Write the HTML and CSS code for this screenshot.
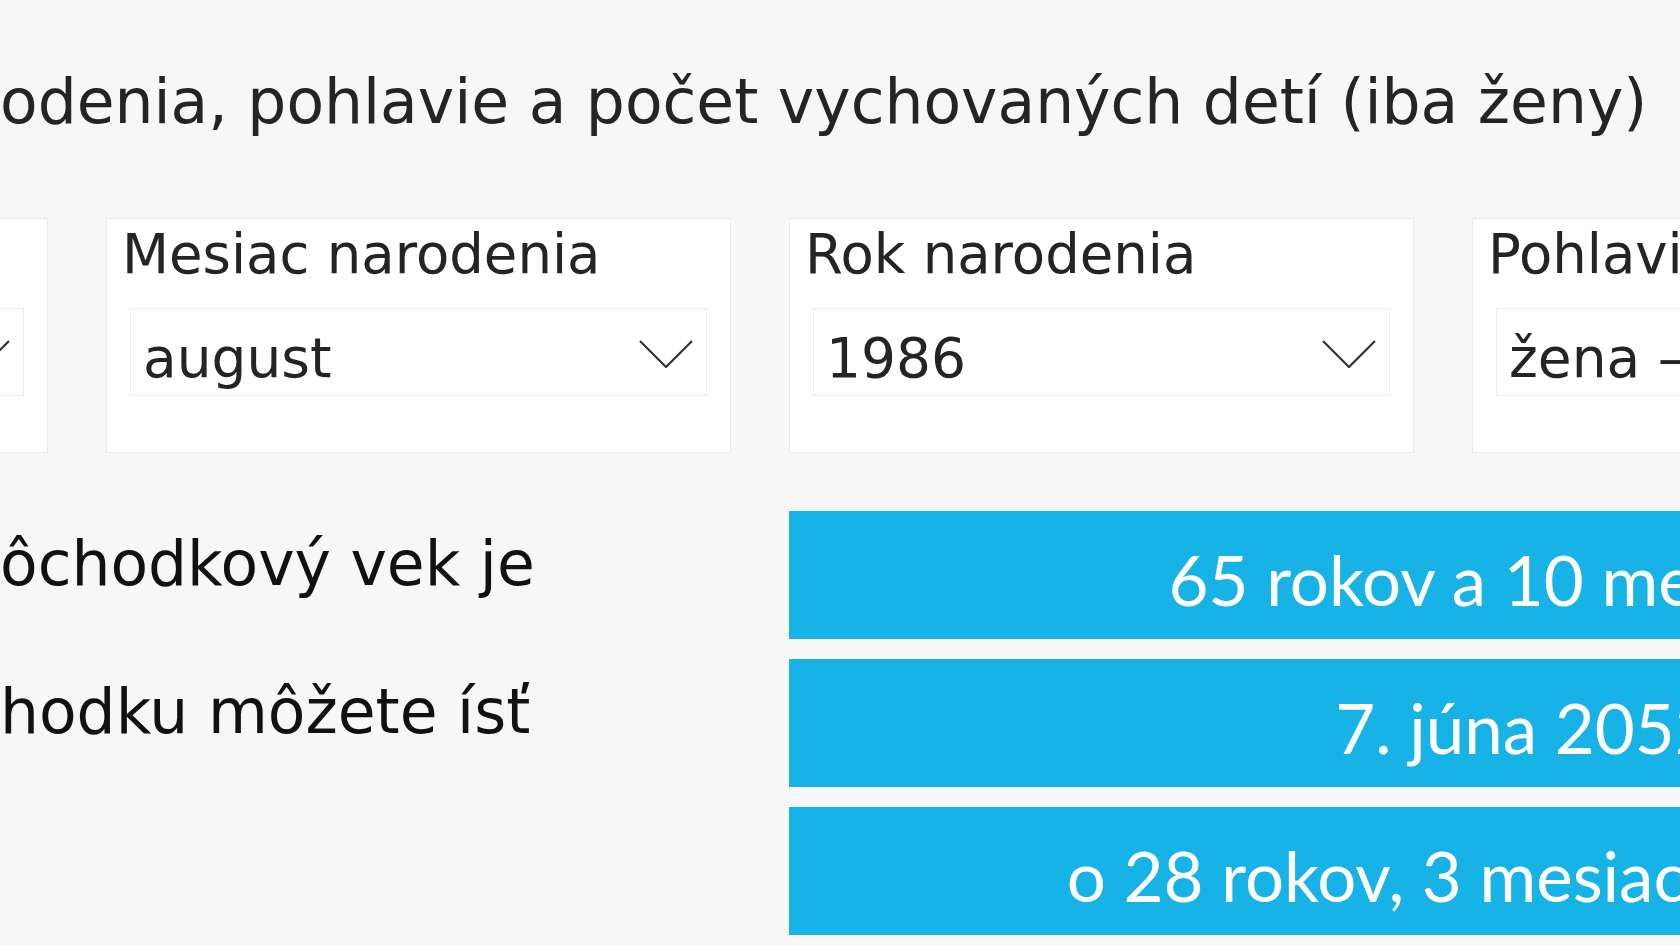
FILE: index.html
```html
<!DOCTYPE html>
<html lang="sk">
<head>
<meta charset="utf-8">
<title>Dôchodkový vek</title>
<link rel="stylesheet" href="styles.css">
</head>
<body>
<div class="page">
  <h1 class="title">odenia, pohlavie a počet vychovaných detí (iba ženy)</h1>

  <div class="slicers">
    <div class="slicer">
      <div class="slicer-label">Deň narodenia</div>
      <div class="dropdown">
        <span class="dropdown-value">7</span>
        <svg class="chevron" viewBox="0 0 54 28" width="54" height="28"><polyline points="1,1 27,27 53,1"/></svg>
      </div>
    </div>
    <div class="slicer">
      <div class="slicer-label">Mesiac narodenia</div>
      <div class="dropdown">
        <span class="dropdown-value">august</span>
        <svg class="chevron" viewBox="0 0 54 28" width="54" height="28"><polyline points="1,1 27,27 53,1"/></svg>
      </div>
    </div>
    <div class="slicer">
      <div class="slicer-label">Rok narodenia</div>
      <div class="dropdown">
        <span class="dropdown-value">1986</span>
        <svg class="chevron" viewBox="0 0 54 28" width="54" height="28"><polyline points="1,1 27,27 53,1"/></svg>
      </div>
    </div>
    <div class="slicer">
      <div class="slicer-label">Pohlavie</div>
      <div class="dropdown">
        <span class="dropdown-value">žena – 2 deti</span>
        <svg class="chevron" viewBox="0 0 54 28" width="54" height="28"><polyline points="1,1 27,27 53,1"/></svg>
      </div>
    </div>
  </div>

  <div class="results">
    <div class="result-label">ôchodkový vek je</div>
    <div class="result-card">65 rokov a 10 mesiacov</div>
    <div class="result-label">hodku môžete ísť</div>
    <div class="result-card">7. júna 2052</div>
    <div class="result-label"></div>
    <div class="result-card">o 28 rokov, 3 mesiace a 12 dní</div>
  </div>
</div>
</body>
</html>
```

FILE: styles.css
```css
html, body {
  margin: 0;
  padding: 0;
  background: #f7f7f7;
}

.page {
  width: 1680px;
  height: 945px;
  overflow: hidden;
  background: #f7f7f7;
  font-family: "DejaVu Sans", Verdana, sans-serif;
  color: #252423;
}

.title {
  margin: 0;
  padding-top: 67px;
  font-size: 61.5px;
  line-height: 70px;
  font-weight: normal;
  white-space: nowrap;
  color: #252423;
}

.slicers {
  display: flex;
  gap: 58px;
  margin-top: 81px;
  margin-left: -577px;
}

.slicer {
  flex: 0 0 auto;
  box-sizing: border-box;
  width: 625px;
  height: 235px;
  background: #ffffff;
  border: 1px solid #ebebeb;
  padding: 4px 23px 0 15px;
}

.slicer-label {
  font-size: 54.5px;
  line-height: 62px;
  white-space: nowrap;
  color: #252423;
}

.dropdown {
  box-sizing: border-box;
  margin-top: 23px;
  margin-left: 8px;
  height: 88px;
  border: 1px solid #ececec;
  background: #ffffff;
  display: flex;
  align-items: flex-start;
  padding: 18px 13px 0 12px;
  overflow: hidden;
}

.dropdown-value {
  flex: 1 1 auto;
  font-size: 55px;
  line-height: 62px;
  white-space: nowrap;
  color: #252423;
}

.chevron {
  flex: 0 0 auto;
  align-self: center;
  margin-top: -14px;
}

.chevron polyline {
  fill: none;
  stroke: #333333;
  stroke-width: 2.2;
}

.results {
  display: grid;
  grid-template-columns: 789px 1472px;
  grid-auto-rows: 128px;
  row-gap: 20px;
  margin-top: 58px;
}

.result-label {
  font-size: 61.5px;
  line-height: 70px;
  padding-top: 18px;
  white-space: nowrap;
  color: #111111;
}

.result-card {
  background: #17b2e6;
  color: #ffffff;
  font-family: Lato, "Open Sans", sans-serif;
  font-size: 69px;
  line-height: 82px;
  padding-top: 28px;
  box-sizing: border-box;
  text-align: center;
  white-space: nowrap;
}
```
